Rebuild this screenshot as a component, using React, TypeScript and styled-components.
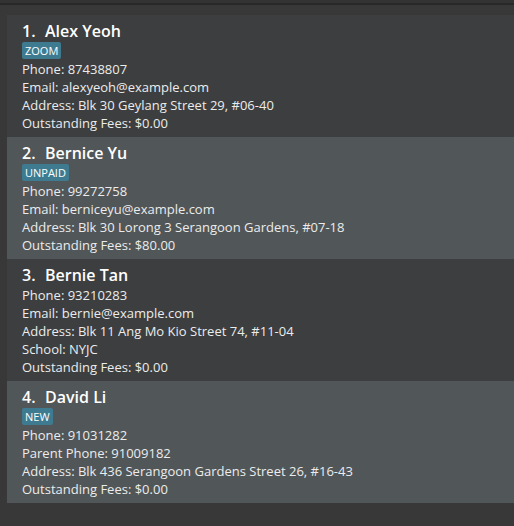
import React from "react";
import styled, { createGlobalStyle } from "styled-components";

const Global = createGlobalStyle`
  html, body { margin: 0; padding: 0; background: #383838; }
  body { font-family: "Open Sans", "Noto Sans", sans-serif; }
`;

const Page = styled.div`
  width: 514px;
  height: 526px;
  background: #383838;
  display: flex;
  flex-direction: column;
  overflow: hidden;
`;

const TopEdge = styled.div`
  height: 3px;
  background: #333333;
  border-bottom: 2px solid #282828;
`;

const List = styled.div`
  display: flex;
  flex-direction: column;
  padding: 10px 0 0 7px;
`;

const Card = styled.div<{ $even: boolean }>`
  background: ${(p) => (p.$even ? "#515658" : "#3c3e3f")};
  padding: 5px 15px 5px;
  height: 122px;
  box-sizing: border-box;
  display: flex;
  flex-direction: column;
  align-items: flex-start;
`;

const NameRow = styled.div`
  display: flex;
  font-size: 16px;
  font-weight: 600;
  line-height: 22px;
  color: #ffffff;
  white-space: pre;
`;

const Index = styled.span`
  width: 23px;
`;

const Tag = styled.span`
  background: #3e7b91;
  color: #ffffff;
  font-size: 11px;
  line-height: 15px;
  padding: 1px 3px;
  border-radius: 2px;
  margin-bottom: 1px;
`;

const Line = styled.div`
  font-size: 13px;
  line-height: 18px;
  color: #ececec;
  white-space: nowrap;
`;

type Person = { name: string; tag?: string; lines: string[] };

const people: Person[] = [
  {
    name: "Alex Yeoh",
    tag: "ZOOM",
    lines: [
      "Phone: 87438807",
      "Email: alexyeoh@example.com",
      "Address: Blk 30 Geylang Street 29, #06-40",
      "Outstanding Fees: $0.00",
    ],
  },
  {
    name: "Bernice Yu",
    tag: "UNPAID",
    lines: [
      "Phone: 99272758",
      "Email: berniceyu@example.com",
      "Address: Blk 30 Lorong 3 Serangoon Gardens, #07-18",
      "Outstanding Fees: $80.00",
    ],
  },
  {
    name: "Bernie Tan",
    lines: [
      "Phone: 93210283",
      "Email: bernie@example.com",
      "Address: Blk 11 Ang Mo Kio Street 74, #11-04",
      "School: NYJC",
      "Outstanding Fees: $0.00",
    ],
  },
  {
    name: "David Li",
    tag: "NEW",
    lines: [
      "Phone: 91031282",
      "Parent Phone: 91009182",
      "Address: Blk 436 Serangoon Gardens Street 26, #16-43",
      "Outstanding Fees: $0.00",
    ],
  },
];

export default function App() {
  return (
    <Page>
      <Global />
      <TopEdge />
      <List>
        {people.map((p, i) => (
          <Card key={p.name} $even={i % 2 === 1}>
            <NameRow>
              <Index>{i + 1}.</Index>
              <span>{p.name}</span>
            </NameRow>
            {p.tag && <Tag>{p.tag}</Tag>}
            {p.lines.map((l) => (
              <Line key={l}>{l}</Line>
            ))}
          </Card>
        ))}
      </List>
    </Page>
  );
}
